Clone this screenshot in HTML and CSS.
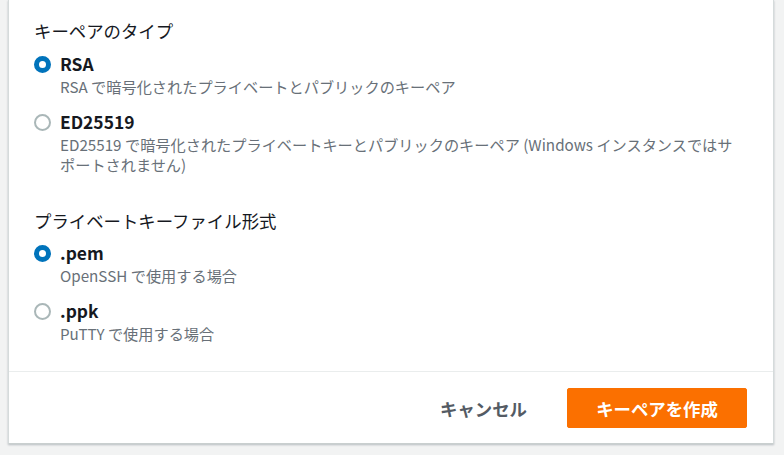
FILE: index.html
```html
<!DOCTYPE html>
<html lang="ja">
<head>
<meta charset="utf-8">
<link rel="stylesheet" href="styles.css">
</head>
<body>
<div class="modal">
  <div class="modal-body">
    <section class="group">
      <h3 class="group-title">キーペアのタイプ</h3>
      <div class="options">
        <label class="option">
          <span class="radio checked"></span>
          <span class="option-text">
            <span class="option-label">RSA</span>
            <span class="option-desc">RSA で暗号化されたプライベートとパブリックのキーペア</span>
          </span>
        </label>
        <label class="option">
          <span class="radio"></span>
          <span class="option-text">
            <span class="option-label">ED25519</span>
            <span class="option-desc">ED25519 で暗号化されたプライベートキーとパブリックのキーペア (Windows インスタンスではサポートされません)</span>
          </span>
        </label>
      </div>
    </section>
    <section class="group">
      <h3 class="group-title">プライベートキーファイル形式</h3>
      <div class="options">
        <label class="option">
          <span class="radio checked"></span>
          <span class="option-text">
            <span class="option-label">.pem</span>
            <span class="option-desc">OpenSSH で使用する場合</span>
          </span>
        </label>
        <label class="option">
          <span class="radio"></span>
          <span class="option-text">
            <span class="option-label">.ppk</span>
            <span class="option-desc">PuTTY で使用する場合</span>
          </span>
        </label>
      </div>
    </section>
  </div>
  <div class="modal-footer">
    <button class="btn btn-link">キャンセル</button>
    <button class="btn btn-primary">キーペアを作成</button>
  </div>
</div>
</body>
</html>
```

FILE: styles.css
```css
html, body {
  margin: 0;
  padding: 0;
  background: #f2f3f3;
  height: 100%;
  overflow: hidden;
}
body {
  font-family: "Noto Sans CJK JP", "Noto Sans", sans-serif;
  color: #16191f;
}
.modal {
  margin-left: 8px;
  width: 764px;
  background: #ffffff;
  border-left: 1px solid #d5dbdb;
  border-right: 1px solid #d5dbdb;
  border-bottom: 1px solid #c9cfcf;
  box-shadow: 0 1px 2px rgba(0, 22, 40, 0.25);
}
.modal-body {
  padding: 19px 26px 28px 25px;
  display: flex;
  flex-direction: column;
  gap: 35px;
}
.group-title {
  margin: 0;
  font-size: 17.4px;
  line-height: 24px;
  font-weight: 400;
}
.options {
  margin-top: 10px;
  display: flex;
  flex-direction: column;
  gap: 15px;
}
.group + .group .options {
  margin-top: 9px;
}
.option {
  display: flex;
  align-items: flex-start;
  gap: 9px;
}
.radio {
  flex: none;
  width: 17px;
  height: 17px;
  margin-top: 2.5px;
  border-radius: 50%;
  box-sizing: border-box;
  border: 2px solid #aab7b8;
  background: #fff;
}
.radio.checked {
  border: 5.5px solid #0073bb;
}
.option-text {
  display: flex;
  flex-direction: column;
  gap: 1px;
  max-width: 690px;
}
.option-label {
  font-size: 17.4px;
  line-height: 22px;
  font-weight: 700;
}
.option-desc {
  font-size: 15.2px;
  line-height: 20px;
  color: #687078;
}
.modal-footer {
  border-top: 1px solid #eaeded;
  padding: 16px 26px 15px;
  display: flex;
  justify-content: flex-end;
  align-items: center;
  gap: 14px;
}
.btn {
  font-family: inherit;
  font-size: 17.4px;
  font-weight: 700;
  height: 40px;
  border-radius: 2px;
  cursor: pointer;
}
.btn-link {
  background: transparent;
  border: none;
  color: #545b64;
  padding: 0 26px;
}
.btn-primary {
  width: 180px;
  background: #fb7000;
  border: 1px solid #fb7000;
  color: #ffffff;
}
```
